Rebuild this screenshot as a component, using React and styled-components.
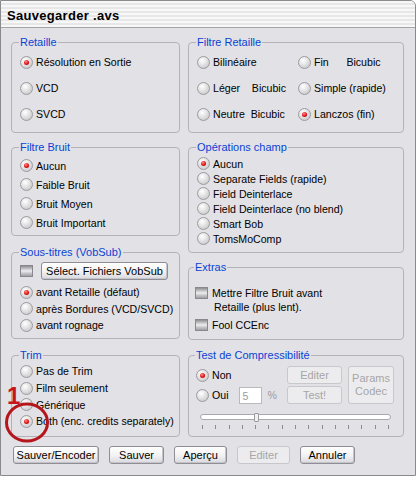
import styled, { createGlobalStyle } from 'styled-components';

const GlobalStyle = createGlobalStyle`
  body {
    margin: 0;
    background: #ffffff;
    font-family: "Liberation Sans", Arial, sans-serif;
    font-size: 10.6px;
    color: #000;
  }
`;

const Window = styled.div`
  position: relative;
  width: 416px;
  height: 476px;
  box-sizing: border-box;
  border: 1px solid #8a8a8e;
  border-radius: 0 6px 0 0;
  background: #e2e1e6;
  overflow: hidden;
`;

const TitleBar = styled.div`
  height: 27px;
  border-bottom: 1px solid #a3a3a8;
  background: repeating-linear-gradient(
    to bottom,
    #f7f7f7 0px,
    #f7f7f7 2px,
    #e7e7e8 2px,
    #e7e7e8 4px
  );
  display: flex;
  align-items: center;
  padding: 2px 0 0 6px;
  box-sizing: border-box;
`;

const Title = styled.span`
  font-size: 13px;
  font-weight: bold;
  letter-spacing: 0.3px;
`;

const Body = styled.div`
  padding: 8px 0 0 10px;
`;

const Columns = styled.div`
  display: grid;
  grid-template-columns: 169px 216px;
  column-gap: 8px;
  align-items: start;
  margin-top: ${(p) => p.$mt || 0}px;
`;

const Stack = styled.div`
  display: flex;
  flex-direction: column;
  gap: ${(p) => p.$gap}px;
`;

const Group = styled.fieldset`
  margin: 0;
  padding: ${(p) => p.$pt || 0}px 6px 0 ${(p) => p.$pl || 8}px;
  min-width: 0;
  height: ${(p) => p.$h}px;
  box-sizing: border-box;
  border: 1px solid #b3b2b8;
  border-radius: 4px;
`;

const Legend = styled.legend`
  padding: 0 1px;
  margin-left: -1px;
  line-height: 13px;
  font-size: 11px;
  color: #0b43d4;
`;

const Options = styled.div`
  display: grid;
  grid-template-columns: ${(p) => p.$cols || '1fr'};
  grid-auto-rows: ${(p) => p.$rowH}px;
`;

const Option = styled.label`
  display: flex;
  align-items: center;
  white-space: pre;
`;

const Radio = styled.span`
  position: relative;
  flex: none;
  width: 13px;
  height: 13px;
  margin-right: 3px;
  box-sizing: border-box;
  border-radius: 50%;
  border: 1px solid #9c9ca0;
  background: radial-gradient(
    circle at 38% 32%,
    #ffffff 0%,
    #e9e9ea 35%,
    #bdbdc0 100%
  );

  &::after {
    content: '';
    display: ${(p) => (p.$on ? 'block' : 'none')};
    position: absolute;
    left: 3px;
    top: 3px;
    width: 5px;
    height: 5px;
    border-radius: 50%;
    background: radial-gradient(circle at 40% 35%, #ff9090, #e01010 55%, #900000);
  }
`;

const Check = styled.span`
  flex: none;
  width: 13px;
  height: 12px;
  margin-right: ${(p) => p.$mr || 4}px;
  box-sizing: border-box;
  border: 1px solid #88888c;
  background: linear-gradient(
    to bottom,
    #8f8f93 0%,
    #c9c9cc 30%,
    #eeeeef 50%,
    #c2c2c5 75%,
    #a2a2a6 100%
  );
`;

const Button = styled.button`
  width: ${(p) => p.$w}px;
  height: ${(p) => p.$h || 18}px;
  padding: 0;
  font-family: inherit;
  font-size: 11px;
  line-height: 12px;
  color: #000;
  border: 1px solid #8e8e94;
  border-radius: 3px;
  background: linear-gradient(to bottom, #ffffff 0%, #f1f1f3 55%, #d9d9de 100%);
  box-shadow: inset -1px -1px 0 #c4c4ca;
  flex: none;

  &:disabled {
    color: #a6a6a6;
    border-color: #c8c8cc;
    background: #ececee;
    box-shadow: none;
  }
`;

const SubRow = styled.div`
  display: flex;
  align-items: center;
  height: 18px;
  margin-top: 3px;
`;

const SubOptions = styled(Options)`
  margin-top: 4px;
`;

const ExtraRow = styled.div`
  display: flex;
  align-items: flex-start;
  line-height: 14px;
  margin-top: ${(p) => p.$mt}px;

  ${Check} {
    margin-top: 1px;
  }
`;

const ExtraText = styled.div`
  span {
    display: block;
  }
  span + span {
    padding-left: 2px;
  }
`;

const TestTop = styled.div`
  display: flex;
  margin-top: 4px;
`;

const TestLeft = styled.div`
  width: 91px;
  display: flex;
  flex-direction: column;
  gap: 2px;
`;

const TestLine = styled.div`
  display: flex;
  align-items: center;
  height: 18px;
`;

const NumberBox = styled.div`
  width: 23px;
  height: 17px;
  margin-left: 10px;
  box-sizing: border-box;
  border: 1px solid #b9b9be;
  background: #fff;
  color: #9c9c9c;
  padding: 1px 0 0 3px;
  line-height: 14px;
`;

const Percent = styled.span`
  margin-left: 6px;
  color: #9c9c9c;
`;

const ButtonCol = styled.div`
  display: flex;
  flex-direction: column;
  gap: 2px;
`;

const ParamsButton = styled(Button)`
  margin-left: 6px;
  line-height: 13px;
`;

const Slider = styled.div`
  margin: 10px 6px 0 4px;
`;

const Track = styled.div`
  position: relative;
  height: 6px;
  box-sizing: border-box;
  border: 1px solid #a8a8ad;
  border-radius: 3px;
  background: #ffffff;
`;

const Thumb = styled.div`
  position: absolute;
  left: 53px;
  top: -2px;
  width: 5px;
  height: 9px;
  box-sizing: border-box;
  border: 1px solid #9a9aa0;
  border-radius: 1px;
  background: #f0f0f2;
`;

const Ticks = styled.div`
  display: flex;
  justify-content: space-between;
  padding: 0 2px;
  margin-top: 5px;

  span {
    width: 1px;
    height: 4px;
    background: #8a8a8f;
  }
`;

const ButtonBar = styled.div`
  display: flex;
  gap: 10px;
  margin: 9px 0 0 2px;
`;

const Marker = styled.div`
  position: absolute;
  left: 6px;
  top: 383px;
  font-size: 24px;
  font-weight: bold;
  line-height: 24px;
  color: #c8141c;
`;

const Ring = styled.svg`
  position: absolute;
  left: 3px;
  top: 401px;
`;

const RadioOption = ({ on, children }) => (
  <Option>
    <Radio $on={on} />
    {children}
  </Option>
);

export default function App() {
  return (
    <Window>
      <GlobalStyle />
      <TitleBar>
        <Title>Sauvegarder .avs</Title>
      </TitleBar>
      <Body>
        <Columns>
          <Group $h={97}>
            <Legend>Retaille</Legend>
            <Options $rowH={26}>
              <RadioOption on>Résolution en Sortie</RadioOption>
              <RadioOption>VCD</RadioOption>
              <RadioOption>SVCD</RadioOption>
            </Options>
          </Group>
          <Group $h={97}>
            <Legend>Filtre Retaille</Legend>
            <Options $rowH={26} $cols="101px 1fr">
              <RadioOption>Bilinéaire</RadioOption>
              <RadioOption>{'Fin      Bicubic'}</RadioOption>
              <RadioOption>{'Léger    Bicubic'}</RadioOption>
              <RadioOption>Simple (rapide)</RadioOption>
              <RadioOption>{'Neutre  Bicubic'}</RadioOption>
              <RadioOption on>Lanczos (fin)</RadioOption>
            </Options>
          </Group>
        </Columns>

        <Columns $mt={8}>
          <Stack $gap={10}>
            <Group $h={95} $pt={2}>
              <Legend>Filtre Bruit</Legend>
              <Options $rowH={19}>
                <RadioOption on>Aucun</RadioOption>
                <RadioOption>Faible Bruit</RadioOption>
                <RadioOption>Bruit Moyen</RadioOption>
                <RadioOption>Bruit Important</RadioOption>
              </Options>
            </Group>
            <Group $h={93}>
              <Legend>Sous-titres (VobSub)</Legend>
              <SubRow>
                <Check $mr={8} />
                <Button $w={127}>Sélect. Fichiers VobSub</Button>
              </SubRow>
              <SubOptions $rowH={16.5}>
                <RadioOption on>avant Retaille (défaut)</RadioOption>
                <RadioOption>après Bordures (VCD/SVCD)</RadioOption>
                <RadioOption>avant rognage</RadioOption>
              </SubOptions>
            </Group>
          </Stack>
          <Stack $gap={8}>
            <Group $h={112} $pt={2}>
              <Legend>Opérations champ</Legend>
              <Options $rowH={15}>
                <RadioOption on>Aucun</RadioOption>
                <RadioOption>Separate Fields (rapide)</RadioOption>
                <RadioOption>Field Deinterlace</RadioOption>
                <RadioOption>Field Deinterlace (no blend)</RadioOption>
                <RadioOption>Smart Bob</RadioOption>
                <RadioOption>TomsMoComp</RadioOption>
              </Options>
            </Group>
            <Group $h={79} $pl={6}>
              <Legend>Extras</Legend>
              <ExtraRow $mt={12}>
                <Check />
                <ExtraText>
                  <span>Mettre Filtre Bruit avant</span>
                  <span>Retaille (plus lent).</span>
                </ExtraText>
              </ExtraRow>
              <ExtraRow $mt={4}>
                <Check />
                <span>Fool CCEnc</span>
              </ExtraRow>
            </Group>
          </Stack>
        </Columns>

        <Columns $mt={9}>
          <Group $h={88} $pt={1}>
            <Legend>Trim</Legend>
            <Options $rowH={16.7}>
              <RadioOption>Pas de Trim</RadioOption>
              <RadioOption>Film seulement</RadioOption>
              <RadioOption>Générique</RadioOption>
              <RadioOption on>Both (enc. credits separately)</RadioOption>
            </Options>
          </Group>
          <Group $h={88} $pl={7}>
            <Legend>Test de Compressibilité</Legend>
            <TestTop>
              <TestLeft>
                <TestLine>
                  <Radio $on />
                  Non
                </TestLine>
                <TestLine>
                  <Radio />
                  Oui
                  <NumberBox>5</NumberBox>
                  <Percent>%</Percent>
                </TestLine>
              </TestLeft>
              <ButtonCol>
                <Button $w={55} disabled>
                  Editer
                </Button>
                <Button $w={55} disabled>
                  Test!
                </Button>
              </ButtonCol>
              <ParamsButton $w={46} $h={38} disabled>
                Params
                <br />
                Codec
              </ParamsButton>
            </TestTop>
            <Slider>
              <Track>
                <Thumb />
              </Track>
              <Ticks>
                {Array.from({ length: 15 }, (_, i) => (
                  <span key={i} />
                ))}
              </Ticks>
            </Slider>
          </Group>
        </Columns>

        <ButtonBar>
          <Button $w={86}>Sauver/Encoder</Button>
          <Button $w={55}>Sauver</Button>
          <Button $w={53}>Aperçu</Button>
          <Button $w={53} disabled>
            Editer
          </Button>
          <Button $w={55}>Annuler</Button>
        </ButtonBar>
      </Body>

      <Marker>1</Marker>
      <Ring width="46" height="42" viewBox="0 0 46 42">
        <ellipse cx="23" cy="20.5" rx="20.5" ry="18.5" fill="none" stroke="#b5161c" strokeWidth="3" />
      </Ring>
    </Window>
  );
}
